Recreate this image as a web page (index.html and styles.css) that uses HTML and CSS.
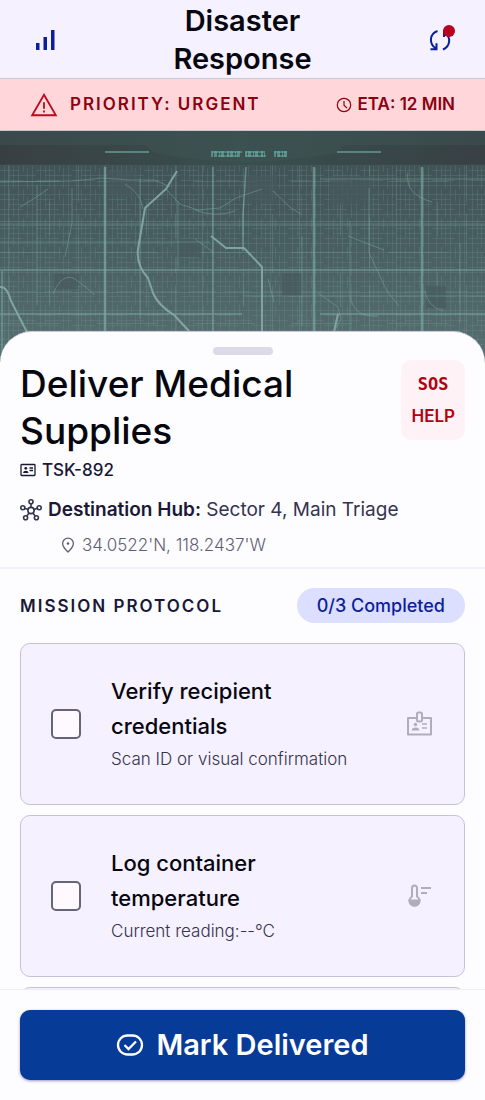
FILE: index.html
```html
<!DOCTYPE html>
<html lang="en">
<head>
<meta charset="utf-8">
<meta name="viewport" content="width=device-width, initial-scale=1">
<title>Disaster Response</title>
<link rel="stylesheet" href="styles.css">
</head>
<body class="app">
<header class="topbar">
  <button class="icon-button" aria-label="Signal strength">
    <svg class="icon-lg" viewBox="0 0 30 30" fill="currentColor"><path d="M6 18h3.500v7H6zM13.500 12H17v13h-3.500zM21 5h3.500v20H21z"/></svg>
  </button>
  <h1 class="app-title">Disaster Response</h1>
  <button class="icon-button" aria-label="Sync, updates pending">
    <svg class="icon-lg" viewBox="0 0 30 30" fill="none" stroke="currentColor" stroke-width="2"><path d="M12.500 6C4 9 4 19 11 23.500M5.500 24.200h6v-6M18 24.500C25.500 21 26.500 12 19 7M25 6h-6v6"/></svg>
    <span class="sync-dot"></span>
  </button>
</header>
<div class="alert" role="status">
  <span class="alert-priority">
    <svg class="alert-icon" viewBox="0 0 26 24" fill="none" stroke="currentColor" stroke-width="1.700"><path d="M13 2.500 24 21.500H2Z"/><path d="M13 9.500v6M13 17v2"/></svg>
    Priority: Urgent
  </span>
  <span class="alert-eta">
    <svg class="icon-sm" viewBox="0 0 16 16" fill="none" stroke="currentColor" stroke-width="1.200"><circle cx="8" cy="8" r="6.700"/><path d="M8 4v4.200l3 3"/></svg>
    ETA: 12 MIN
  </span>
</div>
<div class="map" role="img" aria-label="Street map of the destination area">
  <svg class="map-art" viewBox="0 0 485 236" preserveAspectRatio="xMidYMin slice">
    <defs>
      <linearGradient id="ground" x1="0" y1="0" x2="0" y2="1"><stop offset="0" stop-color="#3d4e50"/><stop offset=".55" stop-color="#4a6063"/><stop offset="1" stop-color="#597073"/></linearGradient>
      <linearGradient id="bar" x1="0" x2="1"><stop offset="0" stop-color="#383f42"/><stop offset=".5" stop-color="#3a4f4f"/><stop offset="1" stop-color="#384044"/></linearGradient>
      <pattern id="blocks" width="36" height="29" patternUnits="userSpaceOnUse"><path d="M4.500 0v29M9.500 0v20M13.500 6v23M18.500 0v29M23.500 0v12M27.500 8v21M32.500 0v29M0 5.500h36M0 10.500h18M9 15.500h27M0 20.500h23M0 25.500h36" stroke="#6f948d" stroke-opacity=".24" fill="none"/></pattern>
      <pattern id="avenues" width="97" height="71" patternUnits="userSpaceOnUse"><path d="M8.500 0v71M49.500 0v34M78.500 12v59M0 19.500h97M0 50.500h61" stroke="#7ba79d" stroke-opacity=".28" fill="none"/></pattern>
    </defs>
    <rect width="485" height="236" fill="url(#ground)"/>
    <rect y="34" width="485" height="202" fill="url(#blocks)"/>
    <rect y="34" width="485" height="202" fill="url(#avenues)"/>
    <g fill="#46595d" fill-opacity=".65"><path d="M108 39h30v27h-30zM245 44h32v29h-32zM282 142h20v23h-20zM426 155h20v22h-20zM54 143h24v15H54zM330 45h42v29h-42zM175 108h26v18h-26z"/></g>
    <g fill="none" stroke="#78a69c" stroke-opacity=".5">
      <path d="M0 51 72 50 103 47 130 49 155 49 170 56M320 48H485M0 94H485M0 111H210M37 54v120M140 47v140M178 70v70M243 165H485M302 105v90M350 90v110M460 112v80M72 57v35L65 126M195 108l18 13M165 57l15 16 18 6 22-2 16-10 26-9M369 57v65l18 38 12 15M273 60l18 17 10 6M125 53q16 9 18 25M195 79q20 8 40 1"/>
      <path d="M53 163q9-22 22-15 11 8 20 16M348 105l36 14M318 162l20 14 3 12-8 15M350 165q4 22 28 20M20 76q14-8 28-18M408 41q-4 22 24 30M425 160q2 15 18 20M268 148l6 23"/>
    </g>
    <g fill="none" stroke="#7fb3a6" stroke-opacity=".6">
      <path d="M0 139H485M0 183H242M320 183H485M213 36v200M246 36l-3 48v36M2 140v96" stroke-width="1.500"/>
      <path d="M105 36v200M314 36v200M422 36v200" stroke-width="2.500"/>
    </g>
    <g fill="none" stroke="#86aaa8" stroke-linejoin="round" stroke-opacity=".9">
      <path d="M177 40 166 58 145 77 142 95 138 118Q136 134 148 147L153 162Q158 174 174 184L205 217M211 105 226 117 244 117 262 136V236M0 156q7-1 11 14L29 205M338 183 333 205" stroke-width="2"/>
    </g>
    <rect width="485" height="34" fill="url(#bar)"/>
    <path d="M0 0h485v14H345L335 22Q245 40 155 22L145 14H0Z" fill="#3f5754" fill-opacity=".45"/>
    <path d="M105 21h44M337 21h44" stroke="#558680" stroke-width="2"/>
    <path d="M0 34h485" stroke="#3a4a4c"/>
    <g stroke="#69aaa1" fill="none"><path d="M211 23h30m4 0h20m9 0h13" stroke-width="6" stroke-dasharray="2 1 3 2 1 1 3 3" stroke-opacity=".65"/><path d="M212 21h30m4 0h18m10 0h13M218 25h20m8 0h20m12 0h8" stroke-width="1.500" stroke-opacity=".7"/></g>
  </svg>
</div>
<main class="sheet">
  <div class="handle"></div>
  <section class="summary">
    <div class="summary-head">
      <div class="summary-text">
        <h2 class="task-title">Deliver Medical Supplies</h2>
        <p class="task-id">
          <svg class="icon-sm" viewBox="0 0 16 16" fill="none" stroke="currentColor" stroke-width="1.300"><rect x="1" y="2.500" width="14" height="11" rx=".7"/><path d="M9.500 6h3.500M9.500 8.500h3.500"/><circle cx="5.800" cy="6.300" r="1.400" fill="currentColor" stroke="none"/><path d="M3 11q.3-2.200 2.800-2.200T8.600 11Z" fill="currentColor" stroke="none"/></svg>
          TSK-892
        </p>
      </div>
      <button class="help"><span class="help-sos">SOS</span><span>HELP</span></button>
    </div>
    <p class="destination">
      <svg class="icon-md" viewBox="0 0 22 22" fill="none" stroke="currentColor" stroke-width="1.600"><circle cx="11" cy="11.500" r="3.100"/><circle cx="11" cy="2.800" r="2"/><circle cx="2.800" cy="8.700" r="2"/><circle cx="19.200" cy="8.700" r="2"/><circle cx="5.600" cy="18.700" r="2"/><circle cx="16.400" cy="18.700" r="2"/><path d="M11 4.800v3.600M4.700 9.300l3.400 1.200M17.300 9.300l-3.400 1.200M6.800 17l2.300-3M15.200 17l-2.300-3"/></svg>
      <span><strong>Destination Hub:</strong> Sector 4, Main Triage</span>
    </p>
    <p class="coordinates">
      <svg class="icon-sm" viewBox="0 0 16 16" fill="none" stroke="currentColor" stroke-width="1.300"><path d="M8 15Q2.600 10 2.600 6.500a5.400 5.400 0 0 1 10.800 0Q13.400 10 8 15Z"/><circle cx="8" cy="6.500" r="1.300" fill="currentColor" stroke="none"/></svg>
      34.0522'N, 118.2437'W
    </p>
  </section>
  <section class="protocol">
    <div class="protocol-head">
      <h3 class="protocol-title">Mission Protocol</h3>
      <span class="progress">0/3 Completed</span>
    </div>
    <label class="step">
      <input class="step-check" type="checkbox">
      <span class="step-text"><span class="step-title">Verify recipient credentials</span><span class="step-note">Scan ID or visual confirmation</span></span>
      <svg class="step-icon" viewBox="0 0 30 30" fill="none" stroke="currentColor" stroke-width="2"><path d="M12.500 9H4v16.500h23V9h-8.500" stroke-linejoin="round"/><rect x="13" y="3.500" width="5" height="9" rx="1.500"/><path d="M18 15h5M18 19h5" stroke-width="1.600"/><circle cx="11.500" cy="15.500" r="1.700" fill="currentColor" stroke="none"/><path d="M7.500 21.500q.5-3 4-3t4 3Z" fill="currentColor" stroke="none"/></svg>
    </label>
    <label class="step">
      <input class="step-check" type="checkbox">
      <span class="step-text"><span class="step-title">Log container temperature</span><span class="step-note">Current reading:--°C</span></span>
      <svg class="step-icon" viewBox="0 0 30 30" fill="none" stroke="currentColor" stroke-width="2"><path d="M8 15.500V7a2.500 2.500 0 0 1 5 0v8.500a5 5 0 1 1-5 0Z"/><path d="M5.500 19.500h10a5 5 0 0 1-10 0Z" fill="currentColor"/><path d="M17 7h10M17 12h6" stroke-width="2.200"/></svg>
    </label>
    <div class="step step-next"></div>
  </section>
</main>
<footer class="actions">
  <button class="deliver">
    <svg class="deliver-icon" viewBox="0 0 28 28" fill="none" stroke="currentColor" stroke-width="2.300"><rect x="2" y="4.500" width="24" height="19" rx="9.500"/><path d="m8.500 14 4 4 7.500-7.500"/></svg>
    Mark Delivered
  </button>
</footer>
</body>
</html>
```
FILE: styles.css
```css
* { box-sizing: border-box; }
h1, h2, h3, p { margin: 0; }
button { font: inherit; border: 0; cursor: pointer; }
svg { flex: none; display: block; }

.app {
  margin: 0;
  height: 100vh;
  display: flex;
  flex-direction: column;
  overflow: hidden;
  background: #fdfdff;
  color: #07070f;
  font-family: Inter, "Liberation Sans", sans-serif;
  font-size: 17px;
}

.icon-sm { width: 16px; height: 16px; }
.icon-md { width: 22px; height: 22px; }
.icon-lg { width: 30px; height: 30px; }

.topbar {
  flex: none;
  display: flex;
  align-items: center;
  justify-content: space-between;
  padding: 2px 20px 0;
  background: #f5f1ff;
  border-bottom: 1px solid #c9c6d9;
}
.app-title {
  width: 180px;
  font-size: 29px;
  line-height: 38px;
  font-weight: 600;
  text-align: center;
}
.icon-button {
  position: relative;
  padding: 10px;
  background: none;
  color: #0b1f9c;
}
.sync-dot {
  position: absolute;
  top: 10px;
  right: 10px;
  width: 12px;
  height: 12px;
  border-radius: 50%;
  background: #b8001f;
}

.alert {
  flex: none;
  display: flex;
  align-items: center;
  justify-content: space-between;
  padding: 12px 30px;
  background: #ffd6da;
  border-bottom: 1px solid #c8c3d0;
  color: #8c0010;
  line-height: 27px;
  font-weight: 600;
}
.alert-priority, .alert-eta { display: flex; align-items: center; }
.alert-priority { gap: 12px; letter-spacing: 2px; text-transform: uppercase; }
.alert-eta { gap: 6px; }
.alert-icon { width: 28px; height: 26px; color: #b90b1c; }

.map { flex: none; height: 236px; background: #465b5f; }
.map-art { width: 100%; height: 100%; }

.sheet {
  position: relative;
  flex: 1;
  min-height: 0;
  margin-top: -36px;
  overflow: hidden;
  background: #fdfdff;
  border-top: 1px solid #cdc6e2;
  border-radius: 32px 32px 0 0;
}
.handle {
  width: 60px;
  height: 8px;
  margin: 15px auto 5px;
  border-radius: 4px;
  background: #dcd9e8;
}
.summary {
  padding: 0 20px 6px;
  border-bottom: 2px solid #f1effc;
  color: #1a1836;
}
.summary-head { display: flex; align-items: flex-start; justify-content: space-between; gap: 20px; }
.task-title { color: #07070f; font-size: 37px; line-height: 47px; font-weight: 500; }
.task-id { display: flex; align-items: center; gap: 6px; font-size: 17px; line-height: 32px; font-weight: 500; }
.help {
  flex: none;
  display: flex;
  flex-direction: column;
  align-items: center;
  padding: 8px 10px;
  border-radius: 10px;
  background: #fff2f6;
  color: #b20010;
  line-height: 32px;
  font-weight: 600;
}
.help-sos { font-family: "DejaVu Sans Mono", monospace; font-weight: 700; }
.destination {
  display: flex;
  align-items: center;
  gap: 6px;
  margin-top: 6px;
  font-size: 19px;
  line-height: 35px;
  color: #35334e;
}
.destination strong { font-weight: 600; color: #1a1836; }
.coordinates {
  display: flex;
  align-items: center;
  gap: 6px;
  margin-top: 2px;
  padding-left: 40px;
  font-size: 17px;
  line-height: 32px;
  font-weight: 300;
  color: #5f5d74;
}

.protocol { display: flex; flex-direction: column; gap: 10px; padding: 19px 20px 0; }
.protocol-head { display: flex; align-items: center; justify-content: space-between; margin-bottom: 10px; }
.protocol-title { font-size: 17px; font-weight: 600; letter-spacing: 2px; text-transform: uppercase; color: #1a1836; }
.progress {
  padding: 0 20px;
  border-radius: 18px;
  background: #dcdfff;
  color: #0b1f9c;
  font-size: 18px;
  line-height: 35px;
  font-weight: 500;
}
.step {
  display: flex;
  align-items: center;
  gap: 30px;
  padding: 30px;
  background: #f5f1ff;
  border: 1px solid #c5c2d8;
  border-radius: 10px;
}
.step-check {
  appearance: none;
  flex: none;
  width: 30px;
  height: 30px;
  margin: 0;
  border: 2px solid #66647a;
  border-radius: 5px;
  background: #fdf9ff;
}
.step-text { flex: 1; display: flex; flex-direction: column; }
.step-title { font-size: 22px; line-height: 35px; font-weight: 500; }
.step-note { font-size: 17px; line-height: 30px; font-weight: 300; color: #35334e; }
.step-icon { width: 30px; height: 30px; color: #b0adbf; }
.step-next { min-height: 162px; }

.actions {
  flex: none;
  padding: 20px;
  background: #fdfdff;
  border-top: 1px solid #eeebfb;
}
.deliver {
  width: 100%;
  display: flex;
  align-items: center;
  justify-content: center;
  gap: 12px;
  padding: 10px 20px;
  border-radius: 10px;
  background: #063b98;
  box-shadow: 0 1px 3px #9996c8;
  color: #fff;
  font-size: 29px;
  line-height: 50px;
  font-weight: 600;
}
.deliver-icon { width: 28px; height: 28px; }
```
